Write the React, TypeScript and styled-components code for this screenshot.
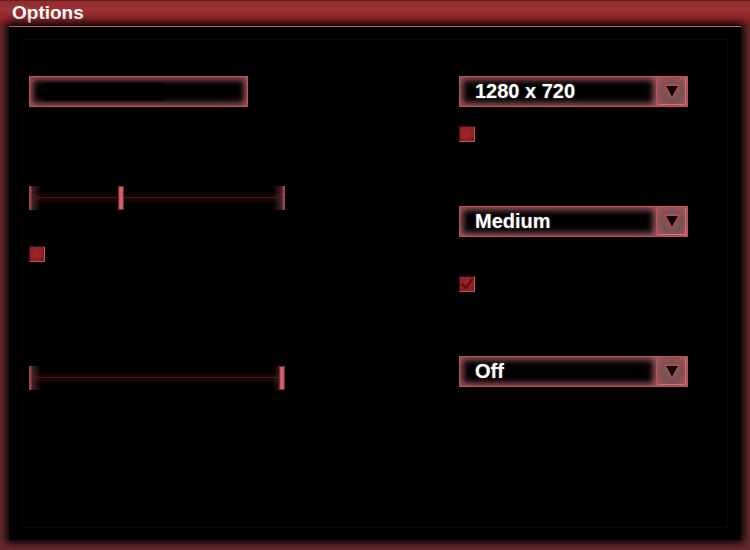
import React from "react";
import styled, { createGlobalStyle } from "styled-components";

const GlobalStyle = createGlobalStyle`
  html, body { margin: 0; padding: 0; background: #692a2e; }
  body { font-family: "Liberation Sans", Arial, sans-serif; }
`;

const Window = styled.div`
  width: 750px;
  height: 550px;
  display: flex;
  flex-direction: column;
  background: #692a2e;
  overflow: hidden;
`;

const TitleBar = styled.div`
  height: 26px;
  box-sizing: border-box;
  padding: 1px 0 0 12px;
  border-top: 1px solid #6e1a1e;
  background: linear-gradient(#8c2b2f 0%, #9c3236 35%, #8d272b 70%, #7a1c20 100%);
  color: #ffffff;
  font-weight: bold;
  font-size: 19px;
  line-height: 21px;
`;

const Frame = styled.div`
  flex: 1;
  display: flex;
  padding: 0 9px 10px 9px;
`;

const Panel = styled.div`
  flex: 1;
  position: relative;
  background: #000;
  border-top: 1px solid #b06066;
  box-shadow: 0 0 8px 3px #000;
  display: grid;
  grid-template-columns: 430px 1fr;
  padding: 49px 0 0 20px;

  &::before {
    content: "";
    position: absolute;
    inset: 12px 13px 12px 13px;
    border: 1px solid #110404;
    pointer-events: none;
  }
`;

const Column = styled.div`
  display: flex;
  flex-direction: column;
  align-items: flex-start;
`;

const Item = styled.div<{ $top: number }>`
  margin-top: ${(p) => p.$top}px;
`;

const TextField = styled.div`
  width: 219px;
  height: 31px;
  box-sizing: border-box;
  border: 1px solid #c4525a;
  background: #000;
  box-shadow: inset 0 0 6px 3px rgba(205, 115, 122, 0.75);
  display: flex;
  align-items: center;
  padding-left: 16px;
`;

const Selection = styled.div`
  width: 116px;
  height: 15px;
  background: #000;
  box-shadow: 0 0 2px 1px #000;
`;

const Slider = styled.div`
  position: relative;
  width: 256px;
  height: 24px;
  background: linear-gradient(
    rgba(0, 0, 0, 0) 25%,
    rgba(50, 8, 12, 0.6) 45%,
    rgba(50, 8, 12, 0.6) 55%,
    rgba(0, 0, 0, 0) 75%
  );

  &::after {
    content: "";
    position: absolute;
    left: 2px;
    right: 2px;
    top: 11px;
    height: 1px;
    background: #461619;
  }
`;

const EndCap = styled.div<{ $side: "left" | "right" }>`
  position: absolute;
  top: 0;
  ${(p) => p.$side}: 0;
  width: 12px;
  height: 24px;
  background: linear-gradient(
    to ${(p) => (p.$side === "left" ? "right" : "left")},
    #9a4248 0px,
    #9a4248 2px,
    rgba(110, 60, 64, 0.6) 3px,
    rgba(40, 20, 22, 0) 12px
  );
`;

const Thumb = styled.div`
  position: absolute;
  top: 0;
  width: 6px;
  height: 24px;
  box-sizing: border-box;
  border: 1px solid #7a2a30;
  background: linear-gradient(to right, #b95058, #d06a72 50%, #b95058);
  z-index: 1;
`;

const CheckBox = styled.div`
  width: 16px;
  height: 16px;
  box-sizing: border-box;
  border: 1px solid;
  border-color: #4a0c10 #c0545a #c0545a #4a0c10;
  background: radial-gradient(circle at 45% 45%, #a0282d 0%, #8e2226 60%, #761a1e 100%);
  display: flex;
  align-items: center;
  justify-content: center;
`;

const Select = styled.div`
  width: 229px;
  height: 31px;
  display: flex;
`;

const SelectValue = styled.div`
  flex: 1;
  box-sizing: border-box;
  border: 1px solid #c4525a;
  border-right: none;
  background: #000;
  box-shadow: inset 0 0 6px 3px rgba(205, 115, 122, 0.75);
  color: #fff;
  font-weight: bold;
  font-size: 20px;
  line-height: 29px;
  padding-left: 15px;
  text-shadow: 0 0 2px rgba(255, 255, 255, 0.35);
`;

const SelectButton = styled.div`
  position: relative;
  width: 32px;
  box-sizing: border-box;
  border: 1px solid #c4525a;
  background: radial-gradient(circle, #6e5a5c 0%, #7e5054 50%, #aa555c 100%);
  display: flex;
  align-items: center;
  justify-content: center;

  &::after {
    content: "";
    position: absolute;
    top: 1px;
    left: 1px;
    right: 1px;
    bottom: 1px;
    border-right: 1px solid #d77078;
    border-bottom: 1px solid #d77078;
    pointer-events: none;
  }
`;

const Arrow = () => (
  <svg width="18" height="17" viewBox="0 0 18 17">
    <defs>
      <filter id="glow" x="-30%" y="-30%" width="160%" height="160%">
        <feGaussianBlur stdDeviation="0.9" />
      </filter>
    </defs>
    <polygon points="1.5,2 16.5,2 9,15" fill="#f04650" filter="url(#glow)" />
    <polygon points="3,3 15,3 9,13.5" fill="#000" />
  </svg>
);

const Check = () => (
  <svg width="14" height="14" viewBox="0 0 14 14">
    <path d="M1.5 6.5 L6 11 L12.5 2" fill="none" stroke="#5c1014" strokeWidth="2.4" />
  </svg>
);

const Dropdown = ({ value }: { value: string }) => (
  <Select>
    <SelectValue>{value}</SelectValue>
    <SelectButton>
      <Arrow />
    </SelectButton>
  </Select>
);

const RangeSlider = ({ at }: { at: number }) => (
  <Slider>
    <EndCap $side="left" />
    <EndCap $side="right" />
    <Thumb style={{ left: at }} />
  </Slider>
);

export default function App() {
  return (
    <>
      <GlobalStyle />
      <Window>
        <TitleBar>Options</TitleBar>
        <Frame>
          <Panel>
            <Column>
              <Item $top={0}>
                <TextField>
                  <Selection />
                </TextField>
              </Item>
              <Item $top={79}>
                <RangeSlider at={89} />
              </Item>
              <Item $top={36}>
                <CheckBox />
              </Item>
              <Item $top={104}>
                <RangeSlider at={250} />
              </Item>
            </Column>
            <Column>
              <Item $top={0}>
                <Dropdown value="1280 x 720" />
              </Item>
              <Item $top={19}>
                <CheckBox />
              </Item>
              <Item $top={64}>
                <Dropdown value="Medium" />
              </Item>
              <Item $top={39}>
                <CheckBox>
                  <Check />
                </CheckBox>
              </Item>
              <Item $top={64}>
                <Dropdown value="Off" />
              </Item>
            </Column>
          </Panel>
        </Frame>
      </Window>
    </>
  );
}
